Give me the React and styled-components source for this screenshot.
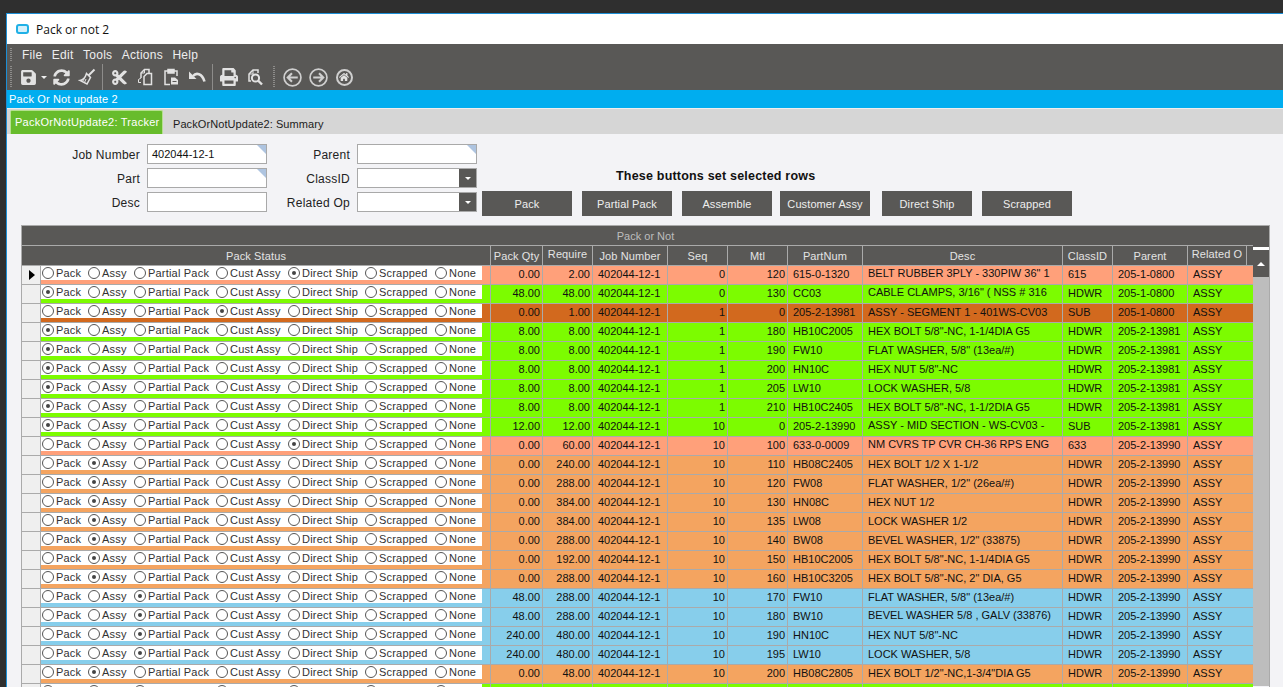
import React from "react";
import styled, { createGlobalStyle } from "styled-components";
import { FaSave, FaSyncAlt, FaCut, FaPrint, FaHome } from "react-icons/fa";

const GlobalStyle = createGlobalStyle`
  html, body {
    margin: 0;
    padding: 0;
    height: 100%;
    overflow: hidden;
    background: #2f2f2f;
    font-family: "Liberation Sans", Arial, sans-serif;
  }
`;

const Page = styled.div`
  height: 687px;
  padding: 13px 0 0 6px;
  box-sizing: border-box;
  overflow: hidden;
`;

const Window = styled.div`
  height: 674px;
  border-top: 1px solid #1c8fd6;
  border-left: 1px solid #1c8fd6;
  background: #f3f3f6;
  overflow: hidden;
`;

const TitleBar = styled.div`
  display: flex;
  align-items: center;
  gap: 7px;
  height: 30px;
  padding-left: 9px;
  box-sizing: border-box;
  background: #fff;
  font-family: "Open Sans", sans-serif;
  font-size: 12px;
  color: #111;
`;

const AppIcon = styled.span`
  box-sizing: border-box;
  width: 13px;
  height: 10px;
  border: 2px solid #1fb0e6;
  border-radius: 3px;
  background: #d4f0fb;
`;

const MenuArea = styled.div`
  height: 46px;
  background: #595856;
  color: #eee;
`;

const MenuRow = styled.div`
  display: flex;
  align-items: center;
  height: 20px;
  padding: 2px 0 0 3px;
  box-sizing: border-box;
  font-size: 12px;
  letter-spacing: 0.25px;
`;

const Grip = styled.span`
  flex: none;
  width: 2px;
  height: ${(p) => p.$h || 14}px;
  margin: ${(p) => p.$m || "0 10px 0 0"};
  background: repeating-linear-gradient(#8d8c8a 0 1px, transparent 1px 2px);
`;

const MenuItem = styled.span`
  margin-right: 9.5px;
`;

const ToolRow = styled.div`
  display: flex;
  align-items: center;
  height: 26px;
  padding-left: 3px;
`;

const ToolBtn = styled.span`
  display: flex;
  align-items: center;
  justify-content: center;
  flex: none;
  width: 26px;
  height: 24px;
  font-size: ${(p) => p.$size || 16}px;
  color: #e2e2e2;
`;

const SaveBtn = styled(ToolBtn)`
  width: 28px;
  justify-content: flex-start;
  gap: 4px;
  font-size: 17px;
`;

const Caret = styled.i`
  border: 3px solid transparent;
  border-top-color: #eee;
  border-bottom: 0;
`;

const ToolDivider = styled.span`
  flex: none;
  width: 1px;
  height: 26px;
  background: #8d8c8a;
  margin: 0 3px 0 2px;
`;

const HomeRing = styled.span`
  display: flex;
  align-items: center;
  justify-content: center;
  box-sizing: border-box;
  width: 17px;
  height: 17px;
  border: 2px solid #cfcfcf;
  border-radius: 50%;
  font-size: 10px;
`;

const BlueStrip = styled.div`
  height: 18px;
  line-height: 18px;
  padding-left: 2px;
  background: #00adef;
  color: #fff;
  font-size: 11px;
  letter-spacing: 0.15px;
`;

const TabStrip = styled.div`
  display: flex;
  align-items: flex-end;
  height: 26px;
  padding-left: 3px;
  background: #d6d6d6;
  border-top: 1px solid #eee;
  box-sizing: border-box;
`;

const Tab = styled.div`
  height: ${(p) => (p.$active ? 24 : 20)}px;
  line-height: ${(p) => (p.$active ? 22 : 20)}px;
  font-size: 11px;
  box-sizing: border-box;
  ${(p) =>
    p.$active
      ? `
    width: 153px;
    padding-left: 4px;
    margin-right: 10px;
    background: #67bc2c;
    color: #fff;
    letter-spacing: 0.25px;
    border: 1px solid #b5e08f;
    border-bottom: 0;
    border-radius: 2px 2px 0 0;
  `
      : `color: #1c1c1c; letter-spacing: 0.08px;`}
`;

const FormArea = styled.div`
  display: flex;
  height: 91px;
  padding-top: 10px;
  box-sizing: border-box;
`;

const FieldGrid = styled.div`
  display: grid;
  grid-template-columns: ${(p) => p.$label}px 120px;
  grid-auto-rows: 20px;
  row-gap: 4px;
  column-gap: 7px;
  font-size: 12px;
  letter-spacing: 0.25px;
  color: #222;
`;

const FieldLabel = styled.label`
  text-align: right;
  line-height: 22px;
`;

const TextBox = styled.div`
  position: relative;
  box-sizing: border-box;
  height: 20px;
  line-height: 19px;
  padding-left: 4px;
  background: #fff;
  border: 1px solid #a9a9a9;
  font-size: 11px;
  letter-spacing: 0;
  color: #111;
  ${(p) =>
    p.$flag &&
    `&::after {
      content: "";
      position: absolute;
      top: 0;
      right: 0;
      border-style: solid;
      border-width: 0 9px 9px 0;
      border-color: transparent #aec4e0 transparent transparent;
    }`}
`;

const ComboBox = styled(TextBox)`
  display: flex;
  justify-content: flex-end;
  padding: 0;
`;

const ComboButton = styled.span`
  display: flex;
  align-items: center;
  justify-content: center;
  width: 17px;
  background: #595856;
  &::after {
    content: "";
    border: 3px solid transparent;
    border-top-color: #fff;
    border-bottom: 0;
  }
`;

const ActionArea = styled.div`
  margin-left: 5px;
  padding-top: 25px;
`;

const ActionTitle = styled.div`
  height: 22px;
  padding-left: 134px;
  font-size: 12.5px;
  letter-spacing: 0.2px;
  font-weight: bold;
  color: #111;
`;

const ActionRow = styled.div`
  display: flex;
`;

const ActionButton = styled.button`
  width: 90px;
  height: 25px;
  margin-right: ${(p) => p.$gap}px;
  padding: 0;
  border: 0;
  background: #595856;
  color: #eee;
  font-family: inherit;
  font-size: 11px;
  letter-spacing: 0.1px;
`;

const GridPanel = styled.div`
  width: 1249px;
  margin-left: 14px;
  border: 1px solid #aaa;
  border-bottom: 0;
  box-sizing: border-box;
`;

const PanelTitle = styled.div`
  height: 19px;
  line-height: 20px;
  text-align: center;
  background: #595856;
  color: #bdbdbd;
  font-size: 11px;
  border-bottom: 1px solid #aaa;
`;

const PanelBody = styled.div`
  display: flex;
`;

const GridMain = styled.div`
  width: 1231px;
`;

const HeaderRow = styled.div`
  display: grid;
  grid-template-columns: 469px 52px 50px 75px 60px 60px 75px 200px 50px 75px 59px 6px;
  height: 19px;
  background: #595856;
`;

const HeaderCell = styled.div`
  text-align: center;
  line-height: ${(p) => (p.$raised ? 17 : 20)}px;
  color: #e4e4e4;
  font-size: 11px;
  letter-spacing: 0.12px;
  border-right: 1px solid #aaa;
  white-space: nowrap;
  overflow: hidden;
  &:last-child {
    border-right: 0;
  }
`;

const Row = styled.div`
  display: grid;
  grid-template-columns: 19px 450px 52px 50px 75px 60px 60px 75px 200px 50px 75px 65px;
  height: 19px;
  background: ${(p) => p.$bg};
  border-top: 1px solid #aaa;
  box-sizing: border-box;
  font-size: 11px;
  color: #111;
`;

const Selector = styled.div`
  display: flex;
  align-items: center;
  justify-content: center;
  background: #efefef;
  border-right: 1px solid #aaa;
  padding-left: 1px;
`;

const RowMarker = styled.i`
  border-style: solid;
  border-width: 5px 0 5px 6px;
  border-color: transparent transparent transparent #000;
`;

const StatusCell = styled.div`
  border-right: 1px solid #aaa;
  box-sizing: border-box;
`;

const RadioStrip = styled.div`
  display: flex;
  align-items: center;
  width: 441px;
  height: 14px;
  background: #fff;
`;

const RadioOption = styled.span`
  display: flex;
  align-items: center;
  width: ${(p) => p.$w}px;
  color: #333;
  letter-spacing: 0.2px;
  flex: none;
`;

const RadioDot = styled.span`
  display: flex;
  align-items: center;
  justify-content: center;
  flex: none;
  box-sizing: border-box;
  width: 12px;
  height: 12px;
  margin: 0 2px 0 1px;
  border: 1px solid #555;
  border-radius: 50%;
  background: #fff;
  &::after {
    content: "";
    width: 4px;
    height: 4px;
    border-radius: 50%;
    background: ${(p) => (p.$on ? "#444" : "transparent")};
  }
`;

const Cell = styled.div`
  box-sizing: border-box;
  padding: ${(p) => (p.$right ? "0 2px 0 0" : "0 0 0 5px")};
  text-align: ${(p) => (p.$right ? "right" : "left")};
  line-height: ${(p) => (p.$up ? 15 : 17)}px;
  border-right: ${(p) => (p.$last ? "0" : "1px solid #aaa")};
  white-space: nowrap;
  overflow: hidden;
`;

const ScrollBar = styled.div`
  width: 17px;
  height: 440px;
  background: #bdbdbd;
`;

const ScrollCap = styled.div`
  height: 3px;
  background: #fff;
  border-top: 1px solid #595856;
  box-shadow: 0 -1px 0 #595856;
`;

const ScrollUp = styled.div`
  display: flex;
  align-items: center;
  justify-content: center;
  height: 27px;
  background: #595856;
  &::after {
    content: "";
    border: 4px solid transparent;
    border-bottom-color: #fff;
    border-top: 0;
  }
`;

const lineIcon = {
  width: 18,
  height: 18,
  viewBox: "0 0 18 18",
  fill: "none",
  stroke: "currentColor",
};

const BroomIcon = () => (
  <svg {...lineIcon} strokeWidth="1.5">
    <path d="M16.5 1.5 10.5 7.5" strokeWidth="2" />
    <path d="M8.5 5.5 12.5 9.5 9 16 2 12.5C5 12 7.5 9 8.5 5.5Z" />
    <path d="M6.5 14.5 8 11M4.5 13.5 6.5 10.5" strokeWidth="1" />
  </svg>
);

const CopyIcon = () => (
  <svg {...lineIcon} strokeWidth="1.5">
    <path d="M5 10V5L8.5 1.5H13V5" />
    <path d="M8.5 1.5V5H5" strokeWidth="1" />
    <path d="M8 8.5 11 5.5H15.5V16.5H8Z" />
    <path d="M5 10 2.5 11.5V14.5L5 14.5" strokeWidth="1" />
  </svg>
);

const PasteIcon = () => (
  <svg {...lineIcon} strokeWidth="1.5">
    <path d="M6 3H3V16.5H8" />
    <path d="M12 3H15V8" />
    <path d="M6 1.5H12V5H6Z" fill="currentColor" />
    <path d="M9 9.5H13L16 12V16.5H9Z" fill="currentColor" stroke="none" />
    <path d="M10.5 13.5H14.5" stroke="#595856" strokeWidth="1" />
  </svg>
);

const UndoIcon = () => (
  <svg {...lineIcon} strokeWidth="2.6">
    <path d="M5 8C8 4.5 14 5 16.5 13.5" />
    <path d="M1 3.5V11H8.5Z" fill="currentColor" stroke="none" />
  </svg>
);

const DocSearchIcon = () => (
  <svg {...lineIcon} strokeWidth="1.5">
    <path d="M5 13H3V6L7 2H12V5" />
    <path d="M7 2V6H3" strokeWidth="1" />
    <circle cx="9.5" cy="10" r="3.6" strokeWidth="2" />
    <path d="M12 12.5 16 16.5" strokeWidth="2.4" />
  </svg>
);

const RingArrow = ({ flip }) => (
  <svg {...lineIcon} width="19" height="19" strokeWidth="1.6" stroke="#cfcfcf">
    <circle cx="9" cy="9" r="8" />
    <path
      d={flip ? "M4 9H13M9.5 5 13.5 9 9.5 13" : "M14 9H5M8.5 5 4.5 9 8.5 13"}
      strokeWidth="2"
    />
  </svg>
);

const STATUSES = [
  ["Pack", 46],
  ["Assy", 46],
  ["Partial Pack", 82],
  ["Cust Assy", 72],
  ["Direct Ship", 77],
  ["Scrapped", 70],
  ["None", 48],
];

const SALMON = "#ffa07a";
const GREEN = "#7cfc00";
const CHOC = "#d2691e";
const SANDY = "#f4a460";
const SKY = "#87ceeb";

const P1 = "205-1-0800";
const P2 = "205-2-13981";
const P3 = "205-2-13990";

const rows = [
  [SALMON, "Direct Ship", "0.00", "2.00", 0, 120, "615-0-1320", 'BELT RUBBER 3PLY - 330PIW 36" 1', "615", P1, true],
  [GREEN, "Pack", "48.00", "48.00", 0, 130, "CC03", 'CABLE CLAMPS, 3/16" ( NSS # 316', "HDWR", P1, true],
  [CHOC, "Cust Assy", "0.00", "1.00", 1, 0, "205-2-13981", "ASSY - SEGMENT 1 - 401WS-CV03", "SUB", P1],
  [GREEN, "Pack", "8.00", "8.00", 1, 180, "HB10C2005", 'HEX BOLT 5/8"-NC, 1-1/4DIA G5', "HDWR", P2],
  [GREEN, "Pack", "8.00", "8.00", 1, 190, "FW10", 'FLAT WASHER, 5/8" (13ea/#)', "HDWR", P2],
  [GREEN, "Pack", "8.00", "8.00", 1, 200, "HN10C", 'HEX NUT 5/8"-NC', "HDWR", P2],
  [GREEN, "Pack", "8.00", "8.00", 1, 205, "LW10", "LOCK WASHER, 5/8", "HDWR", P2],
  [GREEN, "Pack", "8.00", "8.00", 1, 210, "HB10C2405", 'HEX BOLT 5/8"-NC, 1-1/2DIA G5', "HDWR", P2],
  [GREEN, "Pack", "12.00", "12.00", 10, 0, "205-2-13990", "ASSY - MID SECTION - WS-CV03 -", "SUB", P2, true],
  [SALMON, "Direct Ship", "0.00", "60.00", 10, 100, "633-0-0009", "NM CVRS TP CVR CH-36 RPS ENG", "633", P3, true],
  [SANDY, "Assy", "0.00", "240.00", 10, 110, "HB08C2405", "HEX BOLT 1/2 X 1-1/2", "HDWR", P3],
  [SANDY, "Assy", "0.00", "288.00", 10, 120, "FW08", 'FLAT WASHER, 1/2" (26ea/#)', "HDWR", P3],
  [SANDY, "Assy", "0.00", "384.00", 10, 130, "HN08C", "HEX NUT 1/2", "HDWR", P3],
  [SANDY, "Assy", "0.00", "384.00", 10, 135, "LW08", "LOCK WASHER 1/2", "HDWR", P3],
  [SANDY, "Assy", "0.00", "288.00", 10, 140, "BW08", 'BEVEL WASHER, 1/2" (33875)', "HDWR", P3],
  [SANDY, "Assy", "0.00", "192.00", 10, 150, "HB10C2005", 'HEX BOLT 5/8"-NC, 1-1/4DIA G5', "HDWR", P3],
  [SANDY, "Assy", "0.00", "288.00", 10, 160, "HB10C3205", 'HEX BOLT 5/8"-NC, 2" DIA, G5', "HDWR", P3],
  [SKY, "Partial Pack", "48.00", "288.00", 10, 170, "FW10", 'FLAT WASHER, 5/8" (13ea/#)', "HDWR", P3],
  [SKY, "Partial Pack", "48.00", "288.00", 10, 180, "BW10", "BEVEL WASHER 5/8 , GALV (33876)", "HDWR", P3, true],
  [SKY, "Partial Pack", "240.00", "480.00", 10, 190, "HN10C", 'HEX NUT 5/8"-NC', "HDWR", P3],
  [SKY, "Partial Pack", "240.00", "480.00", 10, 195, "LW10", "LOCK WASHER, 5/8", "HDWR", P3],
  [SANDY, "Assy", "0.00", "48.00", 10, 200, "HB08C2805", 'HEX BOLT 1/2"-NC,1-3/4"DIA G5', "HDWR", P3],
  [GREEN, "Pack", "", "", "", "", "", "", "", ""],
];

const headers = [
  ["Pack Status"],
  ["Pack Qty"],
  ["Require", true],
  ["Job Number"],
  ["Seq"],
  ["Mtl"],
  ["PartNum"],
  ["Desc"],
  ["ClassID"],
  ["Parent"],
  ["Related O", true],
  [""],
];

const actions = [
  ["Pack", 10],
  ["Partial Pack", 10],
  ["Assemble", 8],
  ["Customer Assy", 12],
  ["Direct Ship", 10],
  ["Scrapped", 0],
];

function StatusRadios({ value, clipped }) {
  return (
    <RadioStrip>
      {STATUSES.map(([name, w]) => (
        <RadioOption key={name} $w={w}>
          <RadioDot $on={name === value} />
          {clipped ? "" : name}
        </RadioOption>
      ))}
    </RadioStrip>
  );
}

export default function App() {
  return (
    <Page>
      <GlobalStyle />
      <Window>
        <TitleBar>
          <AppIcon />
          Pack or not 2
        </TitleBar>

        <MenuArea>
          <MenuRow>
            <Grip />
            <MenuItem>File</MenuItem>
            <MenuItem>Edit</MenuItem>
            <MenuItem>Tools</MenuItem>
            <MenuItem>Actions</MenuItem>
            <MenuItem>Help</MenuItem>
          </MenuRow>
          <ToolRow>
            <Grip $h={22} $m="0 8px 0 0" />
            <SaveBtn><FaSave /><Caret /></SaveBtn>
            <ToolBtn $size={17}><FaSyncAlt /></ToolBtn>
            <ToolBtn><BroomIcon /></ToolBtn>
            <ToolDivider />
            <ToolBtn $size={17}><FaCut /></ToolBtn>
            <ToolBtn><CopyIcon /></ToolBtn>
            <ToolBtn><PasteIcon /></ToolBtn>
            <ToolBtn><UndoIcon /></ToolBtn>
            <ToolDivider />
            <ToolBtn $size={18}><FaPrint /></ToolBtn>
            <ToolBtn><DocSearchIcon /></ToolBtn>
            <Grip $h={22} $m="0 4px 0 5px" />
            <ToolBtn><RingArrow /></ToolBtn>
            <ToolBtn><RingArrow flip /></ToolBtn>
            <ToolBtn><HomeRing><FaHome /></HomeRing></ToolBtn>
          </ToolRow>
        </MenuArea>

        <BlueStrip>Pack Or Not update 2</BlueStrip>

        <TabStrip>
          <Tab $active>PackOrNotUpdate2: Tracker</Tab>
          <Tab>PackOrNotUpdate2: Summary</Tab>
        </TabStrip>

        <FormArea>
          <FieldGrid $label={133}>
            <FieldLabel>Job Number</FieldLabel>
            <TextBox $flag>402044-12-1</TextBox>
            <FieldLabel>Part</FieldLabel>
            <TextBox $flag />
            <FieldLabel>Desc</FieldLabel>
            <TextBox />
          </FieldGrid>
          <FieldGrid $label={83}>
            <FieldLabel>Parent</FieldLabel>
            <TextBox $flag />
            <FieldLabel>ClassID</FieldLabel>
            <ComboBox><ComboButton /></ComboBox>
            <FieldLabel>Related Op</FieldLabel>
            <ComboBox><ComboButton /></ComboBox>
          </FieldGrid>
          <ActionArea>
            <ActionTitle>These buttons set selected rows</ActionTitle>
            <ActionRow>
              {actions.map(([label, gap]) => (
                <ActionButton key={label} $gap={gap}>{label}</ActionButton>
              ))}
            </ActionRow>
          </ActionArea>
        </FormArea>

        <GridPanel>
          <PanelTitle>Pack or Not</PanelTitle>
          <PanelBody>
            <GridMain>
              <HeaderRow>
                {headers.map(([text, raised], i) => (
                  <HeaderCell key={i} $raised={raised}>{text}</HeaderCell>
                ))}
              </HeaderRow>
              {rows.map((r, i) => (
                <Row key={i} $bg={r[0]}>
                  <Selector>{i === 0 && <RowMarker />}</Selector>
                  <StatusCell><StatusRadios value={r[1]} clipped={i === rows.length - 1} /></StatusCell>
                  <Cell $right>{r[2]}</Cell>
                  <Cell $right>{r[3]}</Cell>
                  <Cell>{r[2] && "402044-12-1"}</Cell>
                  <Cell $right>{r[4]}</Cell>
                  <Cell $right>{r[5]}</Cell>
                  <Cell>{r[6]}</Cell>
                  <Cell $up={r[10]}>{r[7]}</Cell>
                  <Cell>{r[8]}</Cell>
                  <Cell>{r[9]}</Cell>
                  <Cell $last>{r[2] && "ASSY"}</Cell>
                </Row>
              ))}
            </GridMain>
            <ScrollBar>
              <ScrollCap />
              <ScrollUp />
            </ScrollBar>
          </PanelBody>
        </GridPanel>
      </Window>
    </Page>
  );
}
